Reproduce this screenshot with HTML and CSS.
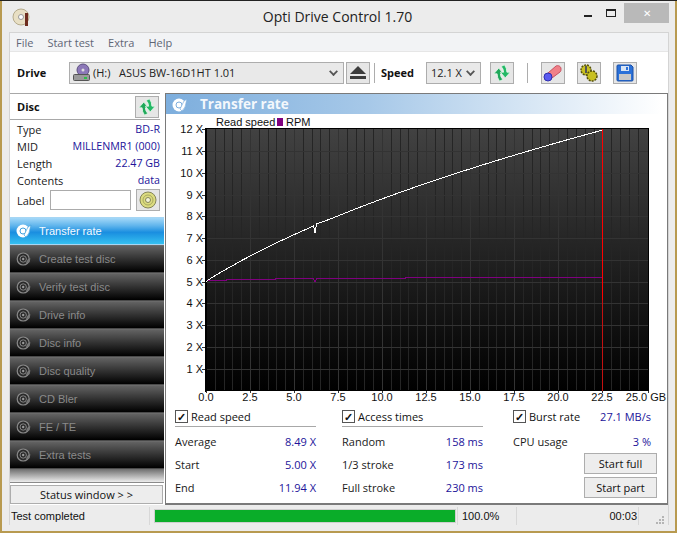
FILE: index.html
```html
<!DOCTYPE html>
<html lang="en">

<head>
    <meta charset="UTF-8">
    <title>Opti Drive Control 1.70</title>
    <link rel="stylesheet" href="styles.css">
</head>

<body>
    <svg class="defs" width="0" height="0">
        <symbol id="arrows" viewBox="0 0 24 22">
            <path d="M2 12L8 5l6 7h-4q0 4 3 7l-4 2q-3-4-3-9z" fill="#1fa85a" stroke="#e8f8ec" stroke-width="1" />
            <path d="M2 12L8 5l6 7h-4q0 4 3 7l-4 2q-3-4-3-9z" fill="#24b866" stroke="#e8f8ec" stroke-width="1" transform="rotate(180 12 11)" />
        </symbol>
        <symbol id="navdisc" viewBox="0 0 20 20">
            <circle cx="9" cy="10" r="7.500" fill="#2a2a2a" stroke="#8a8a8a" stroke-width="1.500" />
            <circle cx="9" cy="10" r="4" fill="none" stroke="#9a9a9a" stroke-width="1" />
            <circle cx="9" cy="10" r="1.500" fill="#9a9a9a" />
            <path d="M12 15l5-1 1-5-3 1z" fill="#777" />
        </symbol>
    </svg>

    <div class="window">
        <div class="titlebar">
            <div class="title_left">
                <svg width="18" height="20" viewBox="0 0 18 20">
                    <circle cx="9" cy="9" r="8" fill="#e8dfc4" stroke="#b5ab8c" />
                    <circle cx="9" cy="9" r="2.500" fill="#fff" stroke="#999" />
                    <rect x="13" y="5" width="3" height="13" fill="#6e2c1e" />
                </svg>
            </div>
            <h1>Opti Drive Control 1.70</h1>
            <div class="title_right">
                <span class="win_min"></span>
                <span class="win_max"></span>
                <span class="win_close">&#10005;</span>
            </div>
        </div><!-- .titlebar end -->

        <div class="client">
            <ul class="menu">
                <li>File</li>
                <li>Start test</li>
                <li>Extra</li>
                <li>Help</li>
            </ul>

            <div class="toolbar">
                <strong class="tb_drive">Drive</strong>
                <div class="combo combo_drive">
                    <svg width="20" height="20" viewBox="0 0 20 20">
                        <circle cx="11" cy="7" r="6" fill="#8c78b8" stroke="#5d4f80" />
                        <circle cx="11" cy="7" r="1.500" fill="#ddd" />
                        <rect x="1.500" y="11.500" width="16" height="6" rx="1" fill="#9a9a9a" stroke="#555" />
                        <rect x="12" y="14" width="3" height="2" fill="#2cc04a" />
                    </svg>
                    <span class="combo_text">(H:)&nbsp;&nbsp; ASUS BW-16D1HT 1.01</span>
                    <span class="chev"></span>
                </div>
                <button class="tool tool_eject">
                    <svg width="16" height="14" viewBox="0 0 16 14">
                        <path d="M8 0l8 8H0z" fill="#3c3c3c" />
                        <rect y="10" width="16" height="3" fill="#3c3c3c" />
                    </svg>
                </button>
                <span class="tb_sep"></span>
                <strong class="tb_speed">Speed</strong>
                <div class="combo combo_speed">
                    <span class="combo_text">12.1 X</span>
                    <span class="chev"></span>
                </div>
                <button class="tool tool_refresh"><svg width="20" height="18"><use href="#arrows" /></svg></button>
                <span class="tb_sep tb_sep2"></span>
                <button class="tool">
                    <svg width="20" height="18" viewBox="0 0 20 18">
                        <path d="M5 9l8-7c2-1 5 0 5 3 0 1 0 2-1 3l-8 6z" fill="#f08088" stroke="#c85060" />
                        <circle cx="5" cy="13" r="4" fill="#5a5af0" stroke="#3030b0" />
                    </svg>
                </button>
                <button class="tool">
                    <svg width="20" height="18" viewBox="0 0 20 18">
                        <circle cx="7" cy="6" r="5" fill="#c8c020" stroke="#55500a" stroke-width="1.500" stroke-dasharray="2 1" />
                        <circle cx="13" cy="12" r="5" fill="#c8c020" stroke="#55500a" stroke-width="1.500" stroke-dasharray="2 1" />
                        <rect x="6" y="2" width="2" height="7" fill="#555" />
                    </svg>
                </button>
                <button class="tool">
                    <svg width="18" height="18" viewBox="0 0 18 18">
                        <path d="M1 2q0-1 1-1h13l2 2v13q0 1-1 1H2q-1 0-1-1z" fill="#2a70d8" stroke="#1a50a8" />
                        <rect x="5" y="2" width="8" height="5" fill="#d8e4f4" />
                        <rect x="10" y="3" width="2" height="3" fill="#2a70d8" />
                        <rect x="3" y="10" width="12" height="6" fill="#c8c8c8" />
                    </svg>
                </button>
            </div><!-- .toolbar end -->

            <div class="columns">
                <aside class="side">
                    <div class="disc_head">
                        <strong>Disc</strong>
                        <button class="tool"><svg width="20" height="18"><use href="#arrows" /></svg></button>
                    </div>
                    <dl class="disc_info">
                        <div><dt>Type</dt><dd>BD-R</dd></div>
                        <div><dt>MID</dt><dd>MILLENMR1 (000)</dd></div>
                        <div><dt>Length</dt><dd>22.47 GB</dd></div>
                        <div><dt>Contents</dt><dd>data</dd></div>
                    </dl>
                    <div class="disc_label">
                        <span>Label</span>
                        <span class="label_input"></span>
                        <button class="tool">
                            <svg width="18" height="18" viewBox="0 0 18 18">
                                <circle cx="9" cy="9" r="8" fill="#dcdc80" stroke="#85855a" />
                                <circle cx="9" cy="9" r="5" fill="none" stroke="#a8a860" />
                                <circle cx="9" cy="9" r="2.500" fill="#f4f4d8" stroke="#85855a" />
                            </svg>
                        </button>
                    </div>
                    <ul class="nav">
                        <li class="on">
                            <svg width="16" height="16" viewBox="0 0 16 16">
                                <circle cx="7" cy="8" r="6.500" fill="#fff" />
                                <circle cx="7" cy="8" r="3" fill="none" stroke="#3d9fdc" />
                                <path d="M8 12l4-8 3-2-2 8-3 4z" fill="#fff" stroke="#3d9fdc" stroke-width=".7" />
                            </svg>
                            Transfer rate
                        </li>
                        <li><svg width="16" height="16"><use href="#navdisc" /></svg>Create test disc</li>
                        <li><svg width="16" height="16"><use href="#navdisc" /></svg>Verify test disc</li>
                        <li><svg width="16" height="16"><use href="#navdisc" /></svg>Drive info</li>
                        <li><svg width="16" height="16"><use href="#navdisc" /></svg>Disc info</li>
                        <li><svg width="16" height="16"><use href="#navdisc" /></svg>Disc quality</li>
                        <li><svg width="16" height="16"><use href="#navdisc" /></svg>CD Bler</li>
                        <li><svg width="16" height="16"><use href="#navdisc" /></svg>FE / TE</li>
                        <li><svg width="16" height="16"><use href="#navdisc" /></svg>Extra tests</li>
                    </ul>
                    <div class="nav_fill"></div>
                    <button class="btn status_btn">Status window &gt; &gt;</button>
                </aside><!-- .side end -->

                <main class="panel">
                    <h2 class="panel_head">
                        <svg width="16" height="16" viewBox="0 0 16 16">
                            <circle cx="7" cy="8" r="6.500" fill="#fff" />
                            <circle cx="7" cy="8" r="3" fill="none" stroke="#7daedd" />
                            <path d="M8 12l4-8 3-2-2 8-3 4z" fill="#fff" stroke="#7daedd" stroke-width=".7" />
                        </svg>
                        Transfer rate
                    </h2>

                    <svg class="chart" width="501" height="290" viewBox="166 114 501 290">
                        <defs>
                            <linearGradient id="plotbg" x1="0" y1="0" x2="0" y2="1">
                                <stop offset="0" stop-color="#424242" />
                                <stop offset="1" stop-color="#000" />
                            </linearGradient>
                        </defs>

                        <g class="legend">
                            <text x="216" y="126">Read speed</text>
                            <rect x="277" y="118" width="6" height="8" fill="#7f007f" />
                            <text x="286" y="126">RPM</text>
                        </g>

                        <rect x="205" y="128" width="444" height="263" fill="url(#plotbg)" />
                        <path class="grid_minor" d="M215.500 129V390M224.500 129V390M232.500 129V390M241.500 129V390M259.500 129V390M268.500 129V390M276.500 129V390M285.500 129V390M303.500 129V390M312.500 129V390M320.500 129V390M329.500 129V390M347.500 129V390M356.500 129V390M364.500 129V390M373.500 129V390M391.500 129V390M400.500 129V390M408.500 129V390M417.500 129V390M435.500 129V390M444.500 129V390M452.500 129V390M461.500 129V390M479.500 129V390M488.500 129V390M496.500 129V390M505.500 129V390M523.500 129V390M532.500 129V390M540.500 129V390M549.500 129V390M567.500 129V390M576.500 129V390M585.500 129V390M594.500 129V390M611.500 129V390M620.500 129V390M629.500 129V390M638.500 129V390" />
                        <path class="grid_major" d="M250.500 129V390M294.500 129V390M338.500 129V390M382.500 129V390M426.500 129V390M470.500 129V390M514.500 129V390M558.500 129V390M207 151.500H648M207 173.500H648M207 195.500H648M207 216.500H648M207 238.500H648M207 260.500H648M207 282.500H648M207 303.500H648M207 325.500H648M207 347.500H648M207 369.500H648" />
                        <path class="axis" d="M205.500 128V392M206.500 128V392M205 128.500H649M648.500 128V391" />
                        <path class="ticks" d="M202 129.500H205M202 151.500H205M202 173.500H205M202 195.500H205M202 216.500H205M202 238.500H205M202 260.500H205M202 282.500H205M202 303.500H205M202 325.500H205M202 347.500H205M202 369.500H205M206.500 391V393M250.500 391V393M294.500 391V393M338.500 391V393M382.500 391V393M426.500 391V393M470.500 391V393M514.500 391V393M558.500 391V393M602.500 391V393M648.500 391V393" />

                        <polyline class="rpm" points="207,280.500 226,280.500 226,279.500 275,279.500 275,278.500 313,278.500 315,282 317,278.500 405,278.500 405,277.500 602,277.500" />
                        <polyline class="speed" points="206,281.500 210,278.800 214.500,276 223.400,270.800 241.100,260.800 258.800,251.500 276.500,242.800 294.200,234.600 311.800,226.800 313.500,225.500 315,233 316.500,224 329.500,219.300 347.200,212.200 364.900,205.300 382.600,198.700 400.300,192.300 418,186.100 435.700,180.100 453.400,174.200 471,168.600 488.700,163 506.400,157.600 524.100,152.300 541.800,147.100 559.500,142 577.200,137 594.900,132.200 602.400,129.900" />
                        <path class="red_top" d="M602.500 129V300" />
                        <path class="red_bottom" d="M602.500 300V391" />

                        <g class="ylabels">
                            <text x="203" y="133">12 X</text>
                            <text x="203" y="155">11 X</text>
                            <text x="203" y="177">10 X</text>
                            <text x="203" y="199">9 X</text>
                            <text x="203" y="220">8 X</text>
                            <text x="203" y="242">7 X</text>
                            <text x="203" y="264">6 X</text>
                            <text x="203" y="286">5 X</text>
                            <text x="203" y="307">4 X</text>
                            <text x="203" y="329">3 X</text>
                            <text x="203" y="351">2 X</text>
                            <text x="203" y="373">1 X</text>
                        </g>
                        <g class="xlabels">
                            <text x="206" y="401">0.0</text>
                            <text x="250" y="401">2.5</text>
                            <text x="294" y="401">5.0</text>
                            <text x="338" y="401">7.5</text>
                            <text x="382" y="401">10.0</text>
                            <text x="426" y="401">12.5</text>
                            <text x="470" y="401">15.0</text>
                            <text x="514" y="401">17.5</text>
                            <text x="558" y="401">20.0</text>
                            <text x="602" y="401">22.5</text>
                            <text x="646" y="401">25.0 GB</text>
                        </g>
                    </svg>

                    <div class="stats">
                        <div class="stat_col">
                            <label class="check"><span class="box">&#10003;</span>Read speed</label>
                            <div class="row"><span>Average</span><b>8.49 X</b></div>
                            <div class="row"><span>Start</span><b>5.00 X</b></div>
                            <div class="row"><span>End</span><b>11.94 X</b></div>
                        </div>
                        <div class="stat_col">
                            <label class="check"><span class="box">&#10003;</span>Access times</label>
                            <div class="row"><span>Random</span><b>158 ms</b></div>
                            <div class="row"><span>1/3 stroke</span><b>173 ms</b></div>
                            <div class="row"><span>Full stroke</span><b>230 ms</b></div>
                        </div>
                        <div class="stat_last">
                            <div class="burst">
                                <label class="check"><span class="box">&#10003;</span>Burst rate</label>
                                <b>27.1 MB/s</b>
                            </div>
                            <div class="row"><span>CPU usage</span><b>3 %</b></div>
                            <button class="btn start_btn">Start full</button>
                            <button class="btn start_btn">Start part</button>
                        </div>
                    </div><!-- .stats end -->
                </main><!-- .panel end -->
            </div><!-- .columns end -->

            <div class="statusbar">
                <span class="st_msg">Test completed</span>
                <span class="st_bar"><i></i></span>
                <span class="st_pct">100.0%</span>
                <span class="st_free"></span>
                <span class="st_time">00:03</span>
                <span class="st_grip">
                    <svg width="10" height="10" viewBox="0 0 10 10">
                        <path d="M7 1h2v2H7zM4 4h2v2H4zM7 4h2v2H7zM1 7h2v2H1zM4 7h2v2H4zM7 7h2v2H7z" fill="#b4b4b4" />
                    </svg>
                </span>
            </div><!-- .statusbar end -->
        </div><!-- .client end -->
    </div><!-- .window end -->
</body>

</html>
```

FILE: styles.css
```css
@charset "utf-8";

* {
    margin: 0;
    padding: 0;
    box-sizing: border-box;
}

li {
    list-style: none;
}

html,
body {
    height: 533px;
    overflow: hidden;
}

body {
    padding: 1px 2px 2px;
    background: linear-gradient(#222 1px, #b89a50 1px);
    font-family: "Open Sans", "Noto Sans", sans-serif;
    font-size: 11px;
    line-height: 1;
    color: #1a1a1a;
}

.defs {
    display: block;
}

.window {
    height: 530px;
    padding: 0 7px 6px;
    background: #ececec;
    display: flex;
    flex-direction: column;
}

/* title bar */
.titlebar {
    height: 31px;
    flex: none;
    display: grid;
    grid-template-columns: 1fr auto 1fr;
    margin: 0 -7px;
}

.title_left {
    padding: 7px 0 0 10px;
}

.titlebar h1 {
    font-size: 14px;
    font-weight: 400;
    color: #222;
    padding-top: 9px;
    transform: translateX(-1px);
}

.title_right {
    display: flex;
    justify-content: flex-end;
    align-items: flex-start;
    padding-right: 6px;
}

.win_min {
    width: 8px;
    height: 2px;
    margin-top: 14px;
    background: #222;
}

.win_max {
    width: 10px;
    height: 8px;
    margin: 8px 0 0 14px;
    border: 1px solid #222;
    border-top-width: 2px;
}

.win_close {
    width: 45px;
    height: 20px;
    margin: 2px 0 0 8px;
    background: #b9b9b9;
    color: #fff;
    font-size: 10px;
    text-align: center;
    line-height: 20px;
}

/* client area */
.client {
    flex: 1;
    display: flex;
    flex-direction: column;
    border: 1px solid #d4d4d4;
    border-bottom: 0;
    min-height: 0;
    margin-right: -1px;
}

.menu {
    height: 19px;
    flex: none;
    display: flex;
    align-items: center;
    gap: 14px;
    padding-left: 6px;
    background: #f2f3f5;
    border-bottom: 1px solid #e6e6e6;
    color: #5f6675;
    font-size: 11px;
}

.toolbar {
    height: 41px;
    flex: none;
    display: flex;
    align-items: center;
    background: #fff;
    padding-left: 7px;
}

.toolbar strong {
    font-size: 11px;
    font-weight: 700;
    color: #111;
}

.tb_drive {
    width: 52px;
}

.combo {
    height: 22px;
    display: flex;
    align-items: center;
    background: #e9e9e9;
    border: 1px solid #adadad;
    font-size: 11px;
    color: #222;
}

.combo_drive {
    width: 275px;
    padding-left: 2px;
}

.combo_text {
    flex: 1;
    padding-left: 1px;
}

.combo_speed {
    width: 55px;
    margin-right: 9px;
    padding-left: 3px;
}

.chev {
    width: 7px;
    height: 7px;
    margin: 0 6px 3px 0;
    border-right: 2px solid #555;
    border-bottom: 2px solid #555;
    transform: rotate(45deg) scale(.9);
}

.tool {
    width: 24px;
    height: 22px;
    flex: none;
    display: flex;
    align-items: center;
    justify-content: center;
    background: #e6e6e6;
    border: 1px solid #adadad;
}

.toolbar .tool {
    margin-right: 12px;
}

.toolbar .tool_eject {
    margin: 0 4px 0 2px;
}

.toolbar .tool_refresh {
    margin-right: 13px;
}

.tb_sep {
    width: 1px;
    height: 20px;
    background: #adadad;
    margin-right: 6px;
}

.tb_sep2 {
    margin-right: 13px;
}

.tb_speed {
    width: 45px;
}

.columns {
    flex: 1;
    display: flex;
    min-height: 0;
    background: #fff;
}

/* left column */
.side {
    width: 154px;
    flex: none;
    display: flex;
    flex-direction: column;
}

.disc_head {
    height: 27px;
    flex: none;
    display: flex;
    align-items: center;
    justify-content: space-between;
    padding: 0 1px 0 7px;
    border-top: 1px solid #a8a8a8;
    border-bottom: 1px solid #a8a8a8;
    margin-right: 4px;
}

.disc_head strong {
    font-size: 11px;
    color: #111;
}

.disc_info {
    padding: 1px 4px 0 7px;
}

.disc_info div {
    height: 17px;
    display: flex;
    align-items: center;
    justify-content: space-between;
}

.disc_info dd {
    font-size: 10.700px;
    color: #22149a;
}

.disc_label {
    height: 22px;
    flex: none;
    display: flex;
    align-items: center;
    padding-left: 7px;
}

.disc_label span:first-child {
    width: 33px;
}

.label_input {
    width: 81px;
    height: 20px;
    border: 1px solid #ababab;
    margin-right: 5px;
}

.nav {
    margin-top: 6px;
}

.nav li {
    height: 28px;
    display: flex;
    align-items: center;
    gap: 7px;
    padding-left: 6px;
    font-family: "Liberation Sans", Arial, sans-serif;
    font-size: 11px;
    color: #8a8a8a;
    border-top: 1px solid #6a6a6a;
    border-bottom: 1px solid #4a4a4a;
    background: linear-gradient(#626262, #000);
}

.nav li.on {
    color: #f4fbff;
    border-color: #a6d6f4;
    background: linear-gradient(#a4d8f8 0, #5fb4ec 30%, #1a8ee0 55%, #35c0f0 100%);
}

.nav_fill {
    height: 14px;
    flex: none;
    background: linear-gradient(#6e6e6e, #ececec);
    border-bottom: 1px solid #8a8a8a;
}

.btn {
    font-family: inherit;
    font-size: 11px;
    color: #111;
    background: #ededed;
    border: 1px solid #adadad;
}

.status_btn {
    height: 19px;
    margin-top: 2px;
    width: 153px;
}

/* right panel */
.panel {
    flex: 1;
    margin-left: 1px;
    display: flex;
    flex-direction: column;
    border-top: 1px solid #7a7a7a;
    border-left: 1px solid #7a7a7a;
    border-right: 1px solid #7a7a7a;
    border-bottom: 2px solid #7a7a7a;
}

.panel_head {
    height: 20px;
    flex: none;
    display: flex;
    align-items: center;
    gap: 12px;
    padding: 1px 0 0 6px;
    font-size: 13.500px;
    font-weight: 700;
    color: #f4f8fc;
    background: linear-gradient(90deg, #7daedd, #a6c8e8 40%, #fff 99%);
}

.chart {
    display: block;
    flex: none;
}

.chart text {
    font-family: "Liberation Sans", Arial, sans-serif;
    font-size: 11px;
    fill: #111;
}

.ylabels text {
    text-anchor: end;
}

.xlabels text {
    text-anchor: middle;
}

.grid_minor,
.grid_major {
    fill: none;
    stroke-width: 1;
}

.grid_minor {
    stroke: #252525;
}

.grid_major {
    stroke: #333;
}

.axis {
    fill: none;
    stroke: #000;
}

.ticks {
    fill: none;
    stroke: #333;
}

.rpm {
    fill: none;
    stroke: #7f007f;
    stroke-width: 1;
    shape-rendering: crispEdges;
}

.speed {
    fill: none;
    stroke: #fff;
    stroke-width: 1;
    shape-rendering: crispEdges;
}

.red_top {
    fill: none;
    stroke: #f00;
}

.red_bottom {
    fill: none;
    stroke: #c41010;
}

.stats {
    flex: 1;
    display: flex;
    padding: 2px 10px 0 9px;
}

.stat_col {
    width: 141px;
    margin-right: 26px;
}

.stat_col:nth-child(2) {
    margin-right: 30px;
}

.check {
    height: 21px;
    display: flex;
    align-items: center;
    gap: 3px;
    color: #111;
}

.stat_col .check {
    border-bottom: 1px solid #a8a8a8;
    margin-bottom: 3px;
}

.box {
    width: 13px;
    height: 13px;
    border: 1px solid #555;
    font-size: 11px;
    font-weight: 700;
    line-height: 11px;
    text-align: center;
    color: #111;
}

.row {
    height: 23px;
    display: flex;
    align-items: center;
    justify-content: space-between;
}

.row b,
.burst b {
    font-weight: 400;
    color: #22149a;
}

.stat_last {
    flex: 1;
    display: flex;
    flex-direction: column;
    align-items: flex-end;
}

.burst,
.stat_last .row {
    width: 100%;
    display: flex;
    align-items: center;
    justify-content: space-between;
    padding-right: 6px;
}

.stat_last .row {
    height: 23px;
}

.burst {
    height: 21px;
    margin-bottom: 3px;
}

.start_btn {
    width: 73px;
    height: 21px;
    margin-bottom: 3px;
}

/* status bar */
.statusbar {
    height: 20px;
    flex: none;
    display: flex;
    align-items: center;
    padding-top: 2px;
    font-family: "Liberation Sans", Arial, sans-serif;
    font-size: 11px;
    color: #111;
}

.st_msg {
    width: 140px;
    padding-left: 1px;
    height: 100%;
    display: flex;
    align-items: center;
    border-right: 1px solid #d8d8d8;
}

.st_bar {
    width: 308px;
    height: 100%;
    padding: 2px 1px 2px 4px;
    border-right: 1px solid #d8d8d8;
}

.st_bar i {
    display: block;
    height: 100%;
    background: #0aad29;
    border: 1px solid #cfcfcf;
}

.st_pct {
    width: 59px;
    padding-left: 4px;
    height: 100%;
    display: flex;
    align-items: center;
    border-right: 1px solid #d8d8d8;
}

.st_free {
    width: 88px;
}

.st_time {
    width: 34px;
    height: 100%;
    display: flex;
    align-items: center;
    justify-content: flex-end;
    padding-right: 1px;
    border-right: 1px solid #d8d8d8;
}

.st_grip {
    flex: 1;
    display: flex;
    justify-content: flex-end;
    align-items: flex-end;
    align-self: stretch;
    padding-right: 3px;
}

.st_grip svg {
    display: block;
}
```
